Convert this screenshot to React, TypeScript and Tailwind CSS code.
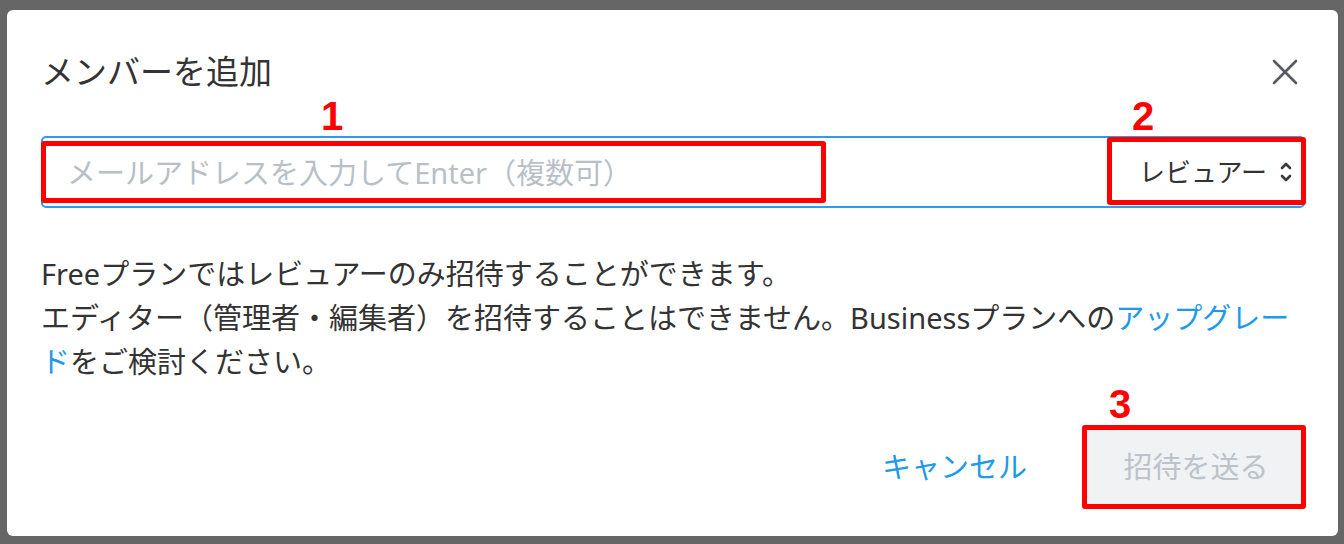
const font = { fontFamily: '"Noto Sans", "Noto Sans CJK JP", sans-serif' };

function CloseIcon() {
  return (
    <svg width="26" height="26" viewBox="0 0 26 26" fill="none" stroke="#555b63" strokeWidth="2.6" strokeLinecap="round">
      <path d="M2 2 L24 24" />
      <path d="M24 2 L2 24" />
    </svg>
  );
}

function UpDownIcon() {
  return (
    <svg width="14" height="24" viewBox="0 0 14 24" fill="none" stroke="#3a3a3a" strokeWidth="2.6" strokeLinecap="round" strokeLinejoin="round">
      <polyline points="3,8 7,4 11,8" />
      <polyline points="3,16 7,20 11,16" />
    </svg>
  );
}

export default function App() {
  return (
    <div className="w-[1344px] h-[544px] bg-[#666666] pt-[10px] pl-[7px] pr-[6px] pb-[8px]" style={font}>
      <div className="relative h-full bg-white rounded-[6px] pl-[34px] pr-[33px] pt-[42px] text-[#333333]">
        <div className="flex items-center justify-between h-[40px]">
          <h2 className="text-[33px] leading-[40px] font-normal text-[#333333]">メンバーを追加</h2>
          <button className="w-[40px] h-[40px] flex items-center justify-center">
            <CloseIcon />
          </button>
        </div>

        <div className="mt-[44px] h-[72px] border-2 border-[#2b9cf0] rounded-[5px] flex items-center pl-[24px] pr-[10px]">
          <input
            className="flex-1 h-full outline-none text-[29px] placeholder:text-[#b8bfc7] bg-transparent"
            placeholder="メールアドレスを入力してEnter（複数可）"
          />
          <div className="flex items-center gap-[12px] text-[26px] text-[#333333]">
            <span>レビュアー</span>
            <UpDownIcon />
          </div>
        </div>

        <p className="mt-[44px] text-[29px] leading-[44px] whitespace-nowrap">
          Freeプランではレビュアーのみ招待することができます。
          <br />
          エディター（管理者・編集者）を招待することはできません。Businessプランへの
          <a className="text-[#1e9ae8]">
            アップグレー
            <br />ド
          </a>
          をご検討ください。
        </p>

        <div className="mt-[45px] flex items-center justify-end gap-[60px]">
          <button className="text-[29px] text-[#1e9ae8]">キャンセル</button>
          <button className="w-[218px] h-[76px] bg-[#f0f2f4] rounded-[4px] text-[29px] text-[#bcc3cb]">招待を送る</button>
        </div>

        {/* annotations */}
        <div className="absolute left-[34px] top-[131px] w-[785px] h-[62px] border-[5px] border-[#ff0000] rounded-[3px]" />
        <div className="absolute left-[1100px] top-[127px] w-[199px] h-[68px] border-[5px] border-[#ff0000] rounded-[3px]" />
        <div className="absolute left-[1075px] top-[415px] w-[224px] h-[84px] border-[5px] border-[#ff0000] rounded-[3px]" />
        <span className="absolute left-[314px] top-[86px] text-[40px] leading-[40px] font-bold text-[#ff0000]" style={{ fontFamily: '"Liberation Sans", Arial, sans-serif' }}>1</span>
        <span className="absolute left-[1125px] top-[86px] text-[40px] leading-[40px] font-bold text-[#ff0000]" style={{ fontFamily: '"Liberation Sans", Arial, sans-serif' }}>2</span>
        <span className="absolute left-[1102px] top-[374px] text-[40px] leading-[40px] font-bold text-[#ff0000]" style={{ fontFamily: '"Liberation Sans", Arial, sans-serif' }}>3</span>
      </div>
    </div>
  );
}
